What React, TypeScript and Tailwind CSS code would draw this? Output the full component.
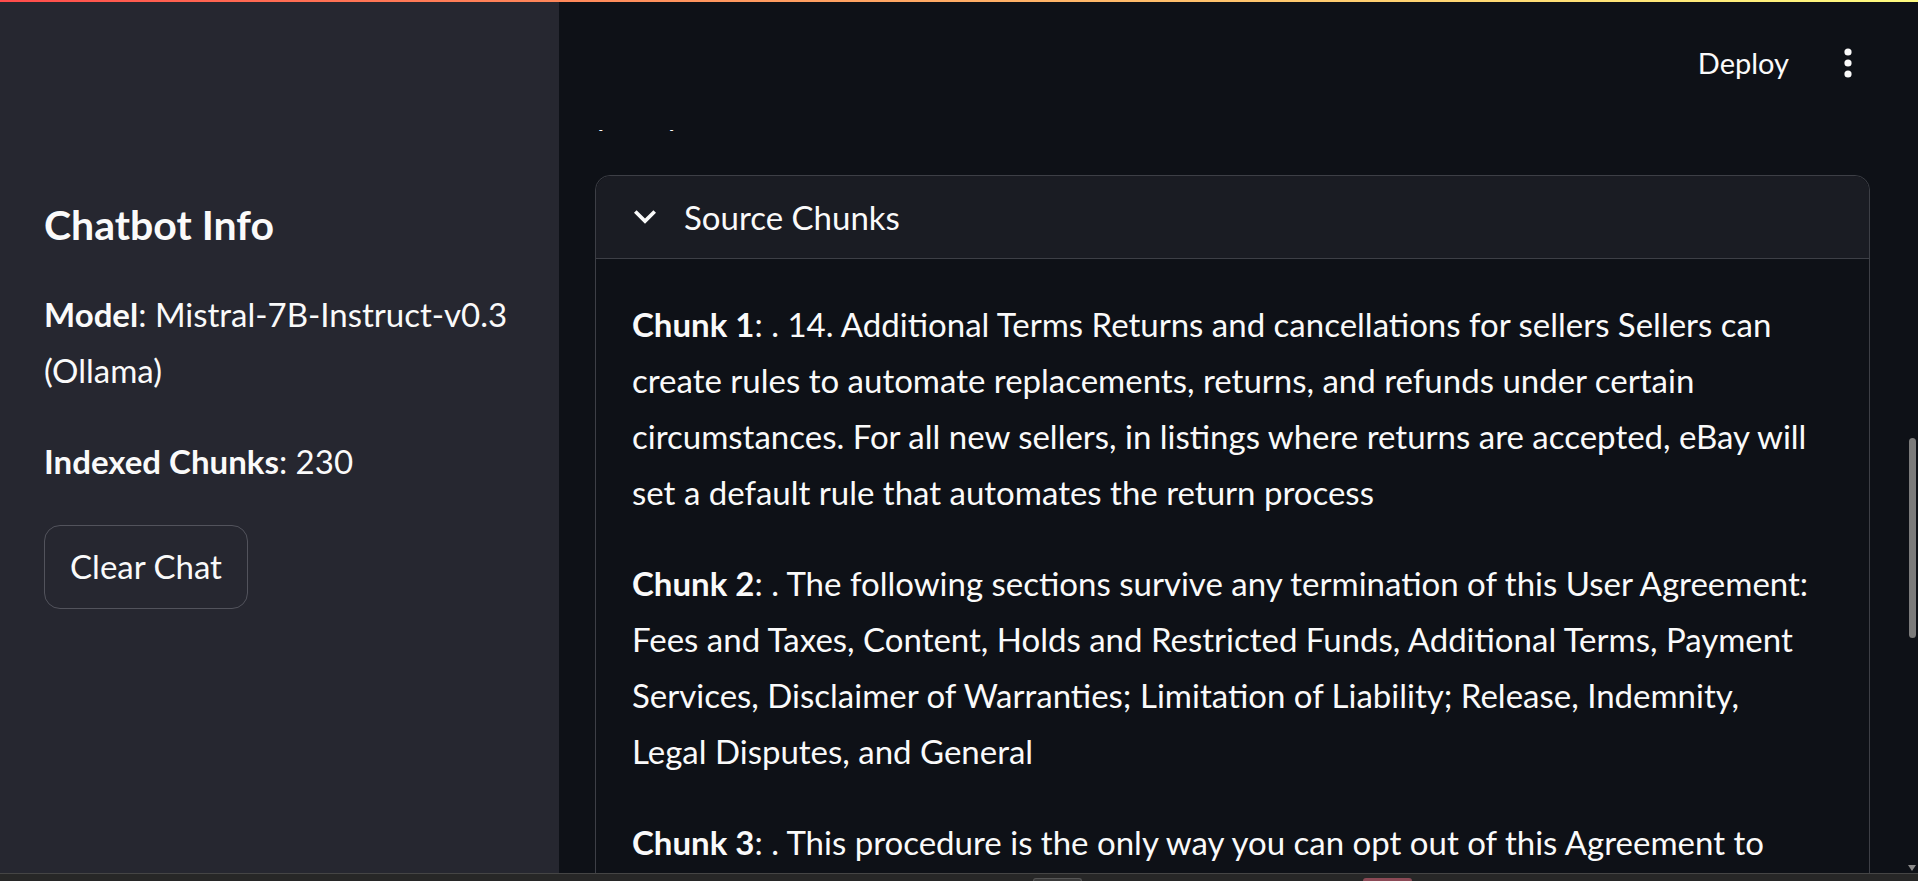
import React from "react";

const chunks = [
  {
    label: "Chunk 1",
    text: ". 14. Additional Terms Returns and cancellations for sellers Sellers can create rules to automate replacements, returns, and refunds under certain circumstances. For all new sellers, in listings where returns are accepted, eBay will set a default rule that automates the return process",
  },
  {
    label: "Chunk 2",
    text: ". The following sections survive any termination of this User Agreement: Fees and Taxes, Content, Holds and Restricted Funds, Additional Terms, Payment Services, Disclaimer of Warranties; Limitation of Liability; Release, Indemnity, Legal Disputes, and General",
  },
  {
    label: "Chunk 3",
    text: ". This procedure is the only way you can opt out of this Agreement to Arbitrate. If you opt out, you may still bring claims in court.",
  },
];

function Kebab() {
  return (
    <svg width="8" height="30" viewBox="0 0 8 30" fill="#fafafa">
      <circle cx="4" cy="4" r="3.6" />
      <circle cx="4" cy="15" r="3.6" />
      <circle cx="4" cy="26" r="3.6" />
    </svg>
  );
}

function Chevron() {
  return (
    <svg width="22" height="14" viewBox="6 8.59 12 7.41" fill="#fafafa">
      <path d="M16.59 8.59L12 13.17 7.41 8.59 6 10l6 6 6-6z" />
    </svg>
  );
}

export default function App() {
  return (
    <div className="h-[881px] w-full flex flex-col bg-[#0e1117] text-[#fafafa] overflow-hidden font-['Lato',sans-serif]">
      <div className="h-[2px] shrink-0 bg-linear-to-r from-[#ff4b4b] to-[#fffd80]" />

      <div className="flex flex-1 min-h-0">
        {/* sidebar */}
        <aside className="w-[559px] shrink-0 bg-[#262730] pl-[44px] pr-[28px] pt-[196px]">
          <h2 className="text-[41px] leading-[53px] font-bold">Chatbot Info</h2>
          <p className="mt-[35px] text-[33px] leading-[56px]">
            <b className="font-bold">Model</b>: Mistral-7B-Instruct-v0.3 (Ollama)
          </p>
          <p className="mt-[35px] text-[33px] leading-[56px]">
            <b className="font-bold">Indexed Chunks</b>: 230
          </p>
          <button className="mt-[36px] h-[84px] w-[204px] rounded-[16px] border border-[#52535c] bg-[#262730] text-[33px] text-[#fafafa]">
            Clear Chat
          </button>
        </aside>

        {/* main */}
        <main className="flex-1 flex min-w-0">
          <div className="flex-1 flex flex-col min-w-0">
            <header className="relative z-10 h-[128px] shrink-0 bg-[#0e1117] flex items-start justify-end pt-[41px] pr-[54px] gap-[55px]">
              <span className="text-[29px] leading-[40px]">Deploy</span>
              <div className="pt-[5px]">
                <Kebab />
              </div>
            </header>

            <div className="flex-1 min-h-0 overflow-hidden pl-[36px] pr-[36px]">
              <p className="-mt-[46px] text-[33px] leading-[56px] pl-[2px]">policy.</p>

              <div className="mt-[35px] rounded-[15px] border border-[#3d3f46]">
                <div className="h-[83px] flex items-center gap-[28px] pl-[38px] bg-[#1a1c23] rounded-t-[15px] border-b border-[#3d3f46]">
                  <Chevron />
                  <span className="text-[33px] leading-[56px]">Source Chunks</span>
                </div>
                <div className="pl-[36px] pr-[55px] pt-[37px]">
                  {chunks.map((c) => (
                    <p key={c.label} className="mb-[35px] text-[33px] leading-[56px]">
                      <b className="font-bold">{c.label}</b>: {c.text}
                    </p>
                  ))}
                </div>
              </div>
            </div>
          </div>

          {/* scrollbar */}
          <div className="w-[12px] shrink-0 flex flex-col items-center pt-[436px]">
            <div className="w-[7px] h-[200px] rounded-full bg-[#7b7b7b]" />
            <div className="flex-1" />
            <div className="mb-[2px] w-0 h-0 border-l-[4px] border-r-[4px] border-t-[6px] border-l-transparent border-r-transparent border-t-[#8a8a8a]" />
          </div>
        </main>
      </div>

      {/* taskbar edge */}
      <div className="h-[8px] shrink-0 border-t border-[#454545] bg-[#272727] flex items-end">
        <div className="ml-[1033px] w-[49px] h-[3px] rounded-t-[6px] bg-[#3a3a3a] border-t border-x border-[#555]" />
        <div className="ml-[281px] w-[49px] h-[3px] rounded-t-[6px] bg-[#8b4a56]" />
      </div>
    </div>
  );
}
